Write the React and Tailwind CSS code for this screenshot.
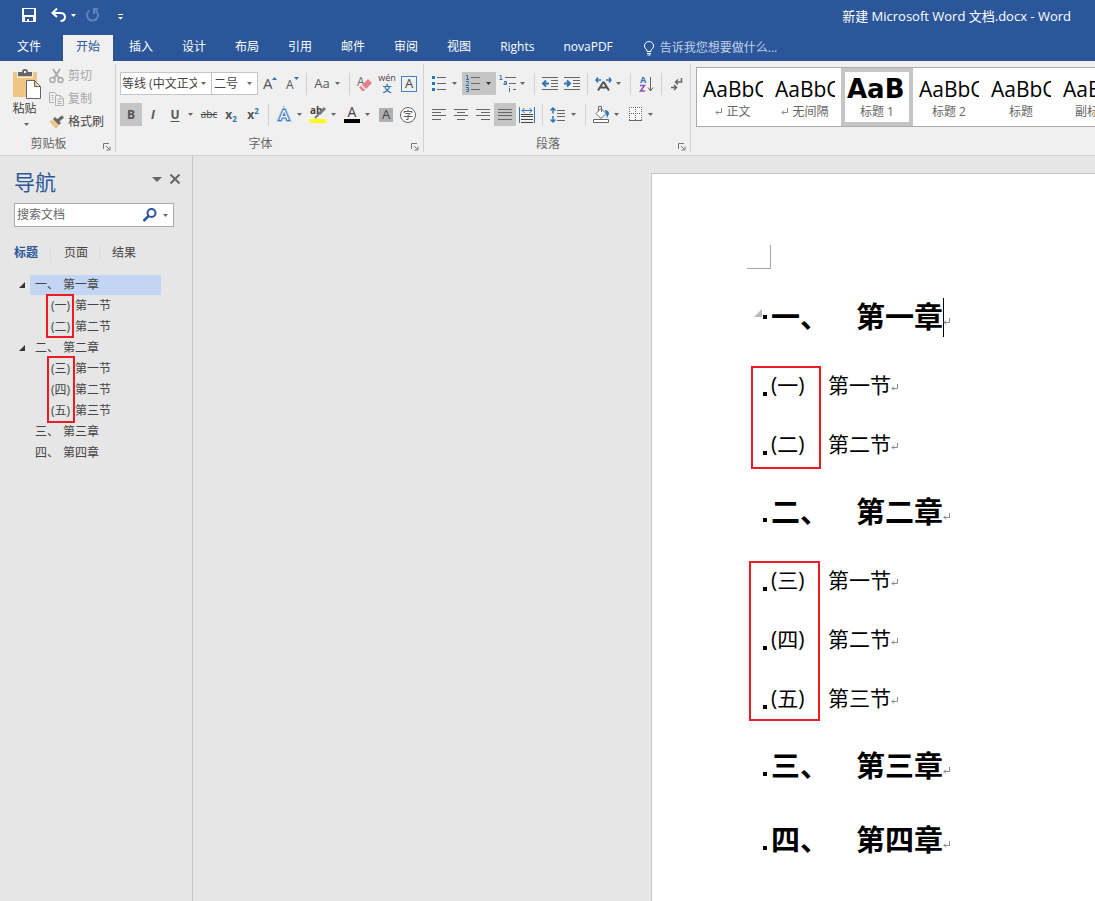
import { useState } from 'react';

const tabs = ['开始', '插入', '设计', '布局', '引用', '邮件', '审阅', '视图', 'Rights', 'novaPDF'];

const styles = [
  { name: '正文', mark: true },
  { name: '无间隔', mark: true },
  { name: '标题 1', bold: true },
  { name: '标题 2' },
  { name: '标题' },
  { name: '副标题' },
];

const chapters = [
  {
    num: '一、',
    title: '第一章',
    sections: [
      { num: '一', title: '第一节' },
      { num: '二', title: '第二节' },
    ],
    navBox: 'left-[46px] -top-px -bottom-px',
    docBox: '-left-5 w-[70px] top-3 bottom-1.5',
  },
  {
    num: '二、',
    title: '第二章',
    sections: [
      { num: '三', title: '第一节' },
      { num: '四', title: '第二节' },
      { num: '五', title: '第三节' },
    ],
    navBox: 'left-[47px] -top-0.5 -bottom-0.5',
    docBox: '-left-[22px] w-[71px] top-3 bottom-2',
  },
  { num: '三、', title: '第三章', sections: [] },
  { num: '四、', title: '第四章', sections: [] },
];

function Triangle({ className = 'text-[#666]' }) {
  return (
    <svg width="5" height="3" viewBox="0 0 5 3" className={className} fill="currentColor">
      <path d="M0 0h5L2.500 3z" />
    </svg>
  );
}

function Caret({ dark }) {
  return (
    <span className="flex w-3 shrink-0 items-center pl-0.5">
      <Triangle className={dark ? 'text-[#333]' : 'text-[#666]'} />
    </span>
  );
}

function Tool({ label, caret, active, className = '', children }) {
  return (
    <button
      type="button"
      aria-label={label}
      className={`flex h-[23px] shrink-0 items-center ${active ? 'bg-[#c5c5c5]' : ''} ${className}`}
    >
      <span className="flex w-[22px] shrink-0 items-center justify-center">{children}</span>
      {caret && <Caret dark={active} />}
    </button>
  );
}

function Sep() {
  return <span className="mx-1 h-[22px] w-px shrink-0 bg-[#d2d2d2]" />;
}

function Group({ label, className, children }) {
  return (
    <section className={`flex shrink-0 flex-col justify-between border-r border-[#d2d2d2] ${className}`}>
      {children}
      <div className="flex h-4 items-center pr-1">
        <span className="flex-1 pr-1.5 text-center text-xs leading-4 text-[#666]">{label}</span>
        <button type="button" aria-label={`${label}设置`} className="mb-px self-end">
          <svg width="8" height="8" viewBox="0 0 8 8" fill="none" stroke="#777">
            <path d="M.5 6V.5H6M3 3l3 3M7 3.500V7H3.500" />
          </svg>
        </button>
      </div>
    </section>
  );
}

function Icon({ children, w = 16, h = 16 }) {
  return (
    <svg width={w} height={h} viewBox={`0 0 ${w} ${h}`} fill="none" stroke="#666" className="shrink-0 overflow-visible">
      {children}
    </svg>
  );
}

function AlignIcon({ d }) {
  return (
    <Icon w={14} h={11}>
      <path d={d} />
    </Icon>
  );
}

function ReturnMark({ className = '' }) {
  return (
    <svg width="7" height="8" viewBox="0 0 7 8" fill="none" stroke="#888" className={`shrink-0 ${className}`}>
      <path d="M6.500 0v4.500H1M3 2.500l-2 2 2 2" />
    </svg>
  );
}

function TitleBar() {
  return (
    <div className="flex h-[35px] items-center pb-px pl-[22px] pr-6 text-white">
      <button type="button" aria-label="保存" className="mb-1">
        <svg width="14" height="14" viewBox="0 0 14 14" fill="#fff" fillRule="evenodd">
          <path d="M0 0h14v14H0zM2 1v6h10V1zM3 9v4h2v-2h2v2h4V9z" />
        </svg>
      </button>
      <button type="button" aria-label="撤消" className="mb-1 ml-[15px] flex items-center gap-[5px]">
        <svg width="15" height="14" viewBox="0 0 15 14" fill="none" stroke="#fff" strokeWidth="2">
          <path d="M6 .5L1.500 5 6 9M2 5h7c3 0 5 1.500 5 4s-2 4-4.500 4" />
        </svg>
        <Triangle className="text-white" />
      </button>
      <button type="button" aria-label="恢复" className="mb-1 ml-[9px]">
        <svg width="15" height="14" viewBox="0 0 15 14" fill="none" stroke="#5f83ba" strokeWidth="2">
          <path d="M4.500 2.500A5.500 5.500 0 1 0 10.500 2.500M8 1h5M9 1v5" />
        </svg>
      </button>
      <button type="button" aria-label="自定义快速访问工具栏" className="ml-[17px]">
        <svg width="7" height="6" viewBox="0 0 7 6" fill="#fff">
          <path d="M1 0h5v1H1zM1 3h5L3.500 5.500z" />
        </svg>
      </button>
      <h1 className="ml-auto truncate text-[13px]">新建 Microsoft Word 文档.docx - Word</h1>
    </div>
  );
}

function RibbonTabs() {
  const [active, setActive] = useState('开始');
  return (
    <nav className="flex h-[26px] items-stretch whitespace-nowrap text-xs text-white">
      <button type="button" className="mr-[5px] w-[58px] pb-0.5">文件</button>
      <div className="flex gap-[3px]">
        {tabs.map((tab) => (
          <button
            key={tab}
            type="button"
            onClick={() => setActive(tab)}
            className={`px-[13px] pb-0.5 ${tab === active ? 'bg-[#f0f0f0] text-[#2b579a]' : ''}`}
          >
            {tab}
          </button>
        ))}
      </div>
      <label className="ml-[18px] flex items-center gap-1.5 text-[#c3d0e6]">
        <svg width="10" height="15" viewBox="0 0 10 15" fill="none" stroke="#fff">
          <path d="M3 10.500V9C1.500 8 .5 6.500.5 5a4.500 4.500 0 0 1 9 0C9.500 6.500 8.500 8 7 9v1.500zM3 12.500h4M3.500 14h3" />
        </svg>
        <input
          type="text"
          aria-label="操作说明搜索"
          placeholder="告诉我您想要做什么..."
          className="w-32 bg-transparent placeholder:text-[#c3d0e6] focus:outline-none"
        />
      </label>
    </nav>
  );
}

function Clipboard() {
  return (
    <Group label="剪贴板" className="w-[116px]">
      <div className="flex pl-3">
        <button type="button" className="flex w-[29px] flex-col items-center pt-1 text-xs text-[#444]">
          <svg width="29" height="32" viewBox="0 0 29 32">
            <path fill="#eec584" d="M1 4h24v25H1z" />
            <path fill="#666" d="M6 4h4a3 3 0 0 1 6 0h4v4H6z" />
            <path fill="#f0f0f0" d="M12 3h2v2h-2zM5 4h1v5h14V4h1v6H5z" />
            <path fill="#fff" stroke="#666" d="M14.500 12.500h8l6 6v12h-14zM22.500 12.500v6h6" />
          </svg>
          <span className="mr-1 mt-px whitespace-nowrap leading-4">粘贴</span>
          <Triangle className="mt-1.5 text-[#666]" />
        </button>
        <div className="ml-2 flex flex-col text-xs text-[#a6a6a6]">
          <button type="button" className="flex h-[23px] items-center gap-1">
            <Icon w={15}>
              <g stroke="#aaa" strokeWidth="2">
                <path d="M4 1l6.500 10M11 1L4.500 11" />
                <circle cx="3.500" cy="12" r="2.500" strokeWidth="1.500" />
                <circle cx="11.500" cy="12" r="2.500" strokeWidth="1.500" />
              </g>
            </Icon>
            剪切
          </button>
          <button type="button" className="flex h-[23px] items-center gap-1">
            <Icon w={15}>
              <path
                stroke="#b0b0b0"
                d="M5 11.500H.5v-10h5l3 3M2.500 4.500h2M2.500 6.500h2M2.500 8.500h2M6.500 4.500h5l3 3v7h-8zM11 4.500V8h3.500M8.500 8.500h2M8.500 10.500h4M8.500 12.500h4"
              />
            </Icon>
            复制
          </button>
          <button type="button" className="flex h-[23px] items-center gap-1 text-[#444]">
            <Icon w={15}>
              <path fill="#eec584" stroke="none" d="M0 7l4-1 6 5-3 4z" />
              <path stroke="#666" strokeWidth="3" d="M5 4l6 6M9 6.500l5-4" />
            </Icon>
            格式刷
          </button>
        </div>
      </div>
    </Group>
  );
}

function FontGroup() {
  return (
    <Group label="字体" className="w-[308px] pt-2">
      <div className="flex flex-col gap-2 pl-1">
        <div className="flex items-center">
          <div className="flex h-[23px] w-[92px] items-center border border-[#c6c6c6] bg-white">
            <select aria-label="字体" className="mr-0.5 w-[76px] appearance-none overflow-hidden pl-px text-xs text-[#444]">
              <option>等线 (中文正文)</option>
            </select>
            <Caret />
          </div>
          <div className="-ml-px flex h-[23px] w-[47px] items-center border border-[#c6c6c6] bg-white">
            <select aria-label="字号" className="w-[34px] appearance-none pl-0.5 text-xs text-[#444]">
              <option>二号</option>
            </select>
            <Caret />
          </div>
          <Tool label="增大字号">
            <Icon>
              <text x="2" y="13" fontSize="15" fill="#555" stroke="none">A</text>
              <path fill="#2e75b5" stroke="none" d="M11 4l2.500-3L16 4z" />
            </Icon>
          </Tool>
          <Tool label="减小字号">
            <Icon>
              <text x="3" y="13" fontSize="12" fill="#555" stroke="none">A</text>
              <path fill="#2e75b5" stroke="none" d="M11 1h5l-2.500 3z" />
            </Icon>
          </Tool>
          <Sep />
          <Tool label="更改大小写" caret>
            <span className="text-[13px] text-[#555]">Aa</span>
          </Tool>
          <Sep />
          <Tool label="清除所有格式">
            <Icon>
              <text x="0" y="10" fontSize="12" fill="#666" stroke="none">A</text>
              <path fill="#e8808c" stroke="none" d="M5 9l6-6 4 4-6 6zM2 11l2-1 4 4-1 1H5z" />
            </Icon>
          </Tool>
          <Tool label="拼音指南">
            <Icon w={18} h={18}>
              <text x="9" y="6" textAnchor="middle" fontSize="9" fill="#444" stroke="none">wén</text>
              <text x="9" y="17" textAnchor="middle" fontSize="9" fontWeight="bold" fill="#2e75b5" stroke="none">文</text>
            </Icon>
          </Tool>
          <Tool label="字符边框">
            <span className="flex size-4 items-center justify-center border border-[#4a82be] text-[13px] leading-none text-[#444]">A</span>
          </Tool>
        </div>
        <div className="flex items-center">
          <Tool label="加粗" active>
            <span className="text-xs font-bold text-[#555]">B</span>
          </Tool>
          <Tool label="倾斜">
            <span className="text-xs font-bold italic text-[#555]">I</span>
          </Tool>
          <Tool label="下划线" caret>
            <span className="text-xs font-bold text-[#555] underline underline-offset-2">U</span>
          </Tool>
          <Tool label="删除线">
            <span className="text-[10px] text-[#444] line-through">abc</span>
          </Tool>
          <Tool label="下标">
            <span className="text-xs font-bold text-[#555]">x</span>
            <span className="self-end text-[8px] font-bold leading-none text-[#2e75b5]">2</span>
          </Tool>
          <Tool label="上标">
            <span className="text-xs font-bold text-[#555]">x</span>
            <span className="self-start text-[8px] font-bold leading-none text-[#2e75b5]">2</span>
          </Tool>
          <Sep />
          <Tool label="文本效果" caret>
            <Icon>
              <text x="8" y="13" textAnchor="middle" fontSize="15" fill="#fff" stroke="#a9c8ea" strokeWidth="4">A</text>
              <text x="8" y="13" textAnchor="middle" fontSize="15" fill="#fff" stroke="#3a78ba" strokeWidth="2">A</text>
              <text x="8" y="13" textAnchor="middle" fontSize="15" fill="#fff" stroke="none">A</text>
            </Icon>
          </Tool>
          <Tool label="突出显示" caret>
            <Icon w={17} h={17}>
              <text x="0" y="8" fontSize="10" fontWeight="bold" fill="#444" stroke="none">ab</text>
              <path stroke="#777" strokeWidth="3" d="M15 2L9 8" />
              <path stroke="#777" strokeWidth="2" d="M9 8l-4 4" />
              <path fill="#ffff00" stroke="none" d="M0 13h16v4H0z" />
            </Icon>
          </Tool>
          <Tool label="字体颜色" caret>
            <Icon h={17}>
              <text x="8" y="11" textAnchor="middle" fontSize="14" fill="#444" stroke="none">A</text>
              <path fill="#000" stroke="none" d="M0 13h16v4H0z" />
            </Icon>
          </Tool>
          <Tool label="字符底纹">
            <span className="flex size-[14px] items-center justify-center bg-[#b0b0b0] text-[13px] leading-none text-[#444]">A</span>
          </Tool>
          <Tool label="带圈字符">
            <span className="flex size-4 shrink-0 items-center justify-center rounded-full border border-[#666] bg-white text-[10px] leading-none text-[#444]">
              字
            </span>
          </Tool>
        </div>
      </div>
    </Group>
  );
}

function ParagraphGroup() {
  return (
    <Group label="段落" className="w-[267px] pt-2">
      <div className="flex flex-col gap-2 pl-1">
        <div className="flex items-center">
          <Tool label="项目符号" caret>
            <Icon w={14} h={17}>
              <path d="M5 2.500h9M5 8.500h9M5 14.500h9" />
              <path fill="#2e75b5" stroke="none" d="M0 1h3v3H0zM0 7h3v3H0zM0 13h3v3H0z" />
            </Icon>
          </Tool>
          <Tool label="编号" caret active>
            <Icon w={16} h={19}>
              <path d="M6 3.500h9M6 9.500h9M6 15.500h9" />
              <path
                stroke="#2e75b5"
                d="M1 1.500h1.500V5M1 5.500h3M1 7.500h2.500V9L1 11.500h3M1 13.500h2.500v4H1M1.500 15.500h2"
              />
            </Icon>
          </Tool>
          <Tool label="多级列表" caret>
            <Icon w={17} h={19}>
              <path d="M6 3.500h11M10 9.500h7M14 15.500h3" />
              <path stroke="#2e75b5" d="M.5 1.500H2V5M.5 5.500h3M5 7.500h2.500v3H5V9h2.500M10.500 12v1M10.500 14v4" />
            </Icon>
          </Tool>
          <Sep />
          <Tool label="减少缩进量">
            <Icon h={17}>
              <path d="M0 2.500h16M9 5.500h7M9 8.500h7M9 11.500h7M0 14.500h16" />
              <path stroke="#2e75b5" strokeWidth="2" d="M7 8.500H1M4 5.500l-3 3 3 3" />
            </Icon>
          </Tool>
          <Tool label="增加缩进量">
            <Icon h={17}>
              <path d="M0 2.500h16M9 5.500h7M9 8.500h7M9 11.500h7M0 14.500h16" />
              <path stroke="#2e75b5" strokeWidth="2" d="M0 8.500h6M3 5.500l3 3-3 3" />
            </Icon>
          </Tool>
          <Sep />
          <Tool label="中文版式" caret>
            <Icon w={17}>
              <path stroke="#555" strokeWidth="2" d="M3 14.500l5-8h1l5 8M5 11.500h7" />
              <path stroke="#2e75b5" strokeWidth="1.500" d="M6 4H1M3 1.500L1 4l2 2.500M11 4h5M14 1.500L16 4l-2 2.500" />
            </Icon>
          </Tool>
          <Sep />
          <Tool label="排序">
            <Icon h={18}>
              <text x="2" y="8" fontSize="9" fontWeight="bold" fill="#2e75b5" stroke="none">A</text>
              <path stroke="#8e4fb0" strokeWidth="1.500" d="M2 10.500h4.500l-4 5.500H7" />
              <path d="M12.500 2v14M10 12.500l2.500 3.500 2.500-3.500" />
            </Icon>
          </Tool>
          <Sep />
          <Tool label="显示编辑标记">
            <Icon w={12} h={14}>
              <path strokeWidth="1.500" d="M10.500 1v4H5M7 2.500L4.500 5 7 7.500M0 10.500h5M3 8l2.500 2.500L3 13" />
            </Icon>
          </Tool>
        </div>
        <div className="flex items-center">
          <Tool label="左对齐">
            <AlignIcon d="M0 .5h14M0 3.500h9M0 6.500h14M0 10.500h9" />
          </Tool>
          <Tool label="居中">
            <AlignIcon d="M0 .5h14M3 3.500h8M0 6.500h14M3 10.500h8" />
          </Tool>
          <Tool label="右对齐">
            <AlignIcon d="M0 .5h14M5 3.500h9M0 6.500h14M5 10.500h9" />
          </Tool>
          <Tool label="两端对齐" active>
            <AlignIcon d="M0 .5h14M0 3.500h14M0 6.500h14M0 10.500h14" />
          </Tool>
          <Tool label="分散对齐">
            <Icon>
              <path stroke="#2e75b5" d="M.5 0v16M15.500 0v16M3 3.500h10M5.500 1L3 3.500 5.500 6M10.500 1L13 3.500 10.500 6" />
              <path stroke="#444" d="M2 7.500h12M2 9.500h12M2 12.500h12M2 15.500h12" />
            </Icon>
          </Tool>
          <Sep />
          <Tool label="行距" caret>
            <Icon h={15}>
              <path d="M7 3.500h8M7 6.500h8M7 9.500h8M7 13.500h8" />
              <path stroke="#2e75b5" strokeWidth="1.500" d="M3 1v5.500M3 9v6M.5 3.500L3 1l2.500 2.500M.5 12.500L3 15l2.500-2.500" />
            </Icon>
          </Tool>
          <Sep />
          <Tool label="底纹" caret>
            <Icon w={17} h={17}>
              <path fill="#fff" d="M8 2.500l5 5-5 5-5-5zM5.500 5V.5h3V6" />
              <path fill="#2e75b5" stroke="none" d="M12 4c3 0 4 2 4 4l-2 4z" />
              <path fill="#fff" d="M.5 13.500h15v3H.5z" />
            </Icon>
          </Tool>
          <Tool label="边框" caret>
            <Icon w={13} h={15}>
              <path fill="#fff" stroke="none" d="M0 0h13v13H0z" />
              <path strokeDasharray="1 1" d="M0 .5h13M.5 0v13M6.500 0v13M12.500 0v13M0 6.500h13" />
              <path d="M0 13.500h13" />
            </Icon>
          </Tool>
        </div>
      </div>
    </Group>
  );
}

function StyleGallery() {
  return (
    <div className="ml-[5px] mt-[3px] flex h-[60px] flex-1 overflow-hidden border border-r-0 border-[#ababab] bg-white">
      {styles.map((style) => (
        <button
          key={style.name}
          type="button"
          className={`flex h-[58px] w-[72px] shrink-0 flex-col items-center justify-center whitespace-nowrap ${
            style.bold ? 'border-4 border-[#c5c5c5]' : ''
          }`}
        >
          <span
            className={`h-[30px] w-[60px] overflow-hidden text-left leading-[30px] text-black ${
              style.bold ? "font-['DejaVu_Sans'] text-[26px] font-bold" : 'text-[21px]'
            }`}
          >
            {style.bold ? 'AaB' : 'AaBbC'}
          </span>
          <span className="flex items-center gap-1 text-xs leading-4 text-[#666]">
            {style.mark && <ReturnMark />}
            {style.name}
          </span>
        </button>
      ))}
    </div>
  );
}

function NavRow({ num, title, selected, open }) {
  return (
    <div className="flex h-[21px] items-center">
      <span className="flex w-[30px] justify-end pr-[5px]">
        {open && (
          <svg width="6" height="6" viewBox="0 0 6 6" fill="#333">
            <path d="M6 0v6H0z" />
          </svg>
        )}
      </span>
      <button
        type="button"
        className={`flex h-5 w-[131px] items-center pl-[5px] pt-px text-left ${selected ? 'bg-[#c2d5f2]' : ''}`}
      >
        <span className="w-7">{num}</span>
        <span>{title}</span>
      </button>
    </div>
  );
}

function NavigationPane() {
  return (
    <aside className="w-[193px] shrink-0 border-r border-[#c6c6c6] text-xs text-[#444]">
      <div className="flex items-center pl-3.5 pr-3 pt-2.5">
        <h2 className="text-[21px] leading-8 text-[#2b579a]">导航</h2>
        <button type="button" aria-label="任务窗格选项" className="mb-1.5 ml-auto">
          <svg width="10" height="5" viewBox="0 0 10 5" fill="#666">
            <path d="M0 0h10L5 5z" />
          </svg>
        </button>
        <button type="button" aria-label="关闭" className="mb-1.5 ml-2">
          <svg width="10" height="10" viewBox="0 0 10 10" stroke="#666" strokeWidth="2">
            <path d="M.5.5l9 9M9.500.5l-9 9" />
          </svg>
        </button>
      </div>
      <div className="ml-3.5 mt-[5px] flex h-6 w-40 items-center border border-[#ababab] bg-white pr-1">
        <input
          type="search"
          aria-label="搜索文档"
          placeholder="搜索文档"
          className="min-w-0 flex-1 pl-0.5 placeholder:text-[#666] focus:outline-none"
        />
        <svg width="14" height="14" viewBox="0 0 14 14" fill="none" stroke="#2b579a" strokeWidth="2">
          <circle cx="8.500" cy="5" r="4" />
          <path d="M5.500 8L.5 13" strokeWidth="2.500" />
        </svg>
        <span className="ml-1.5 pr-px">
          <Triangle />
        </span>
      </div>
      <div className="mt-[17px] flex h-[18px] items-center pl-3.5">
        <button type="button" className="w-9 text-left font-bold text-[#2b579a]">标题</button>
        <button type="button" className="w-[49px] border-l border-[#dcdcdc] pl-[13px] text-left">页面</button>
        <button type="button" className="border-l border-[#dcdcdc] pl-3 text-left">结果</button>
      </div>
      <div className="mt-3">
        {chapters.map((chapter, i) => (
          <div key={chapter.num}>
            <NavRow num={chapter.num} title={chapter.title} selected={i === 0} open={chapter.sections.length > 0} />
            {chapter.sections.length > 0 && (
              <div className="relative">
                {chapter.sections.map((section) => (
                  <button key={section.num} type="button" className="flex h-[21px] items-center pl-[51px] pt-px text-left">
                    <span className="w-6">({section.num})</span>
                    <span>{section.title}</span>
                  </button>
                ))}
                <span className={`absolute w-7 border-2 border-[#ed1c24] ${chapter.navBox}`} />
              </div>
            )}
          </div>
        ))}
      </div>
    </aside>
  );
}

function Bullet({ raised }) {
  return <span className={`-ml-2 mr-1 size-1 shrink-0 bg-black ${raised ? '' : 'mt-4'}`} />;
}

function DocumentPage() {
  return (
    <article className="ml-[458px] mt-[17px] min-w-0 flex-1 overflow-hidden border-l border-t border-[#c6c6c6] bg-white pb-6 pl-[95px] pt-[71px] text-black">
      <div className="size-6 border-b border-r border-[#a6a6a6]" />
      <div className="mt-[11px] whitespace-nowrap pl-6">
        {chapters.map((chapter, i) => (
          <div key={chapter.num}>
            <h2 className="relative flex h-[74px] items-center text-[29px] font-bold">
              {i === 0 && (
                <svg width="8" height="8" viewBox="0 0 8 8" fill="#bbb" className="absolute -left-[17px] top-[29px]">
                  <path d="M8 0v8H0z" />
                </svg>
              )}
              <Bullet raised={i === 0} />
              <span className="w-[85px]">{chapter.num}</span>
              <span>{chapter.title}</span>
              {i === 0 && <span className="-mr-px h-[39px] w-px bg-black" />}
              <ReturnMark className="mt-2.5" />
            </h2>
            {chapter.sections.length > 0 && (
              <div className="relative pb-px pt-0.5">
                {chapter.sections.map((section) => (
                  <h3 key={section.num} className="flex h-[59px] items-center text-[21px]">
                    <Bullet />
                    <span className="w-[57px]">({section.num})</span>
                    <span>{section.title}</span>
                    <ReturnMark className="mt-1" />
                  </h3>
                ))}
                <span className={`absolute border-2 border-[#ed1c24] ${chapter.docBox}`} />
              </div>
            )}
          </div>
        ))}
      </div>
    </article>
  );
}

export default function App() {
  return (
    <div className="flex min-h-screen flex-col overflow-hidden bg-[#e6e6e6] font-['Open_Sans','Noto_Sans_CJK_SC',sans-serif]">
      <header className="bg-[#2b579a]">
        <TitleBar />
        <RibbonTabs />
      </header>
      <div className="flex overflow-hidden border-b border-[#d2d2d2] bg-[#f0f0f0] py-[3px]">
        <div className="flex h-[88px] min-w-0 flex-1">
          <Clipboard />
          <FontGroup />
          <ParagraphGroup />
          <StyleGallery />
        </div>
      </div>
      <main className="flex flex-1">
        <NavigationPane />
        <DocumentPage />
      </main>
    </div>
  );
}
